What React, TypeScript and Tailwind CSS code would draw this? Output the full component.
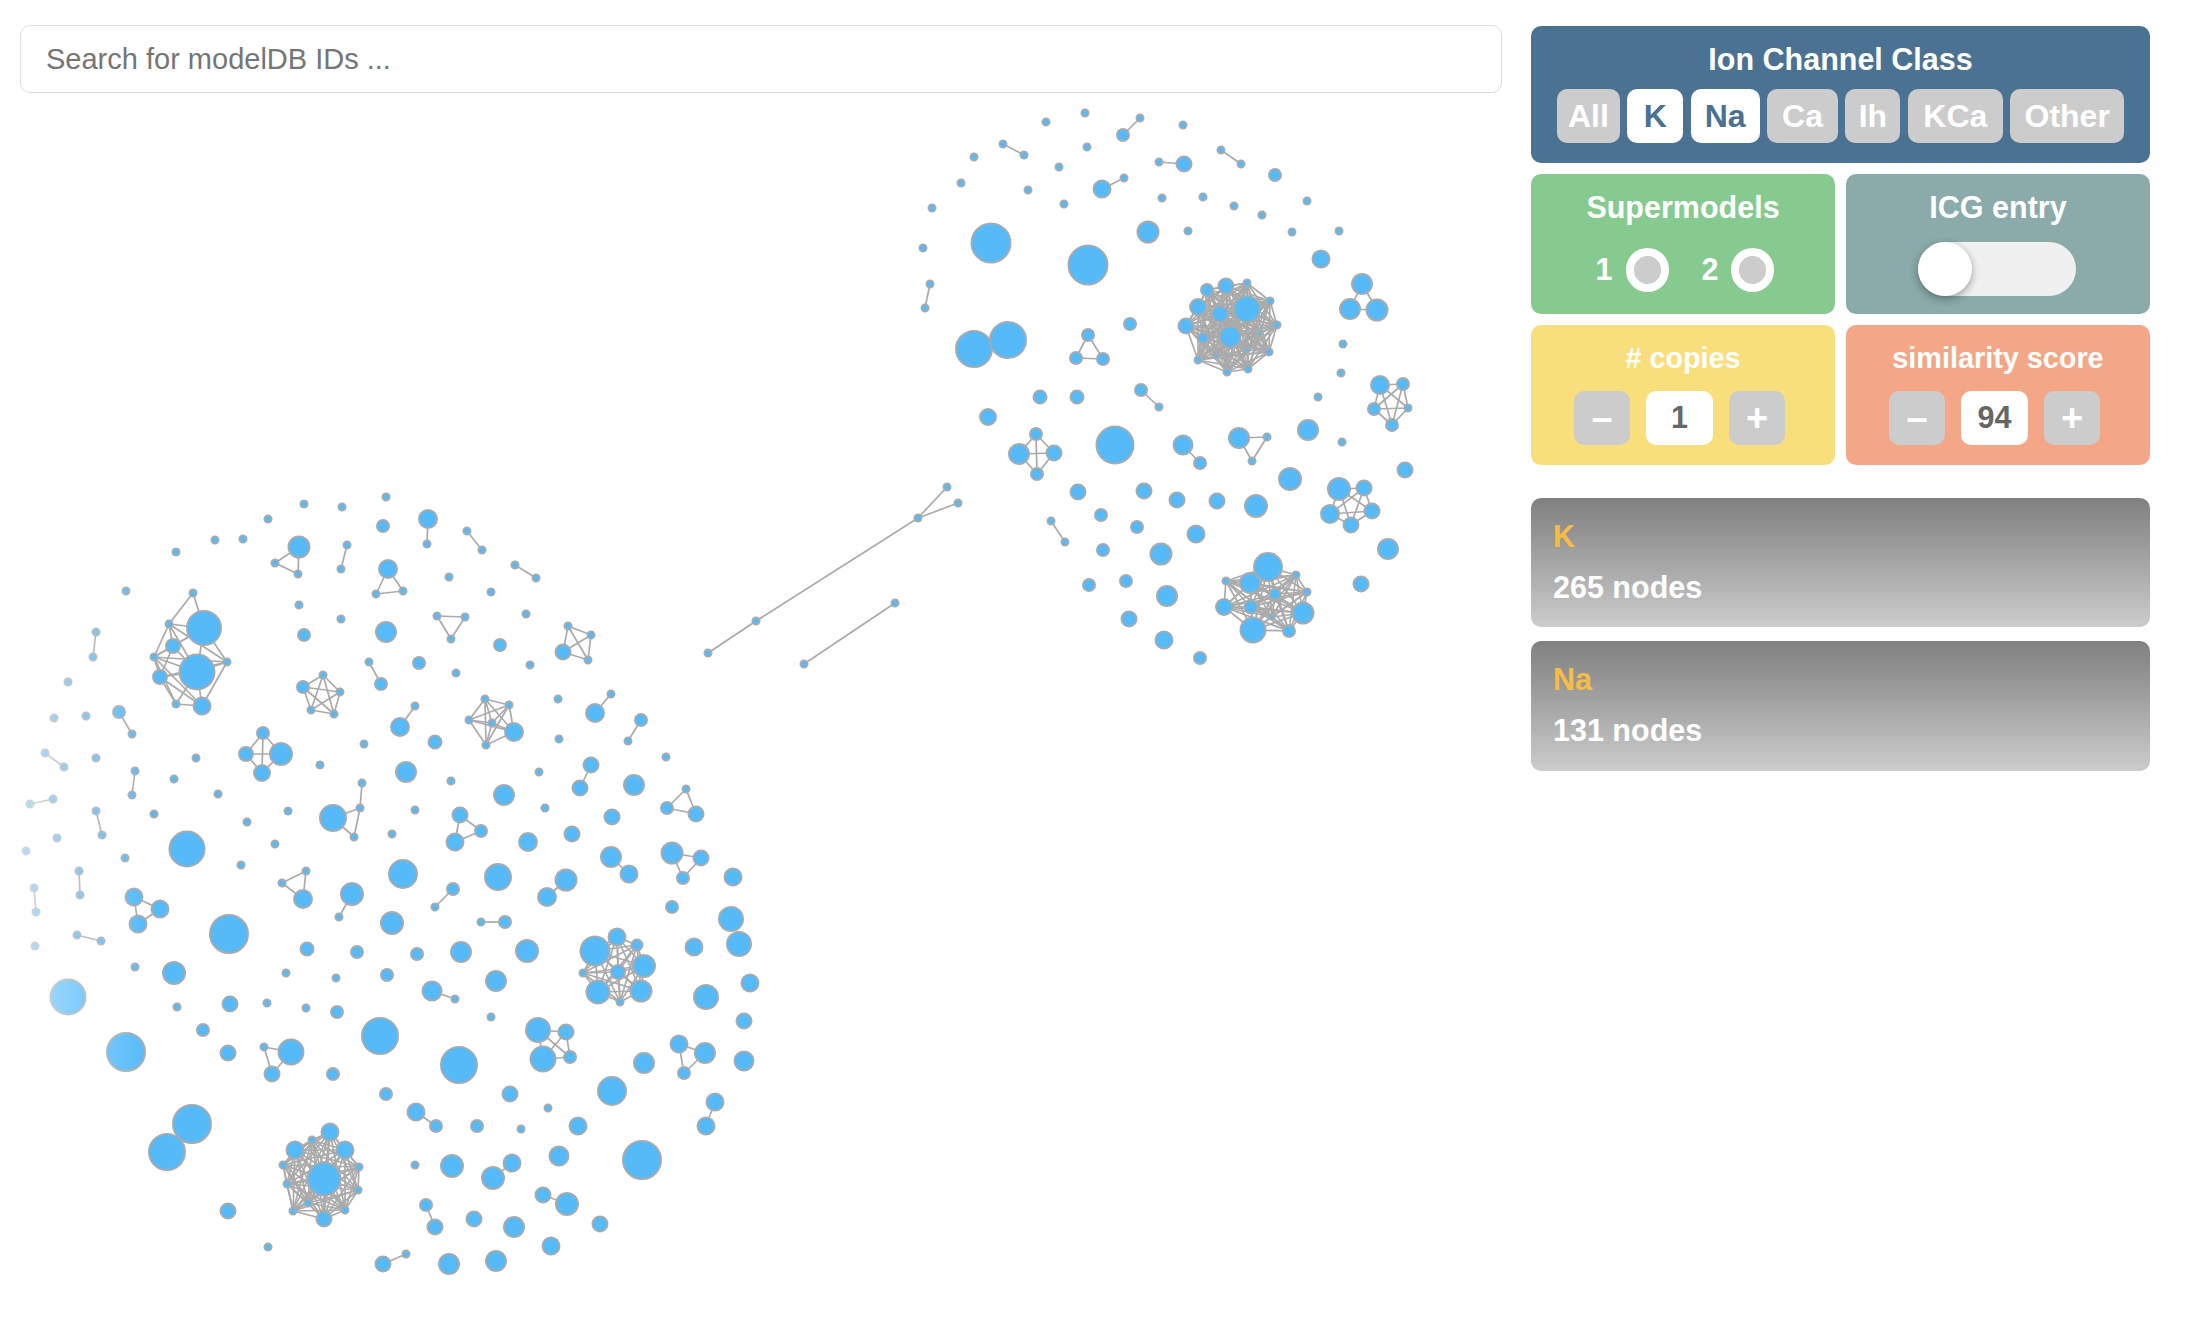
import { useState } from 'react';

type N = [number, number, number];

// x, y, outer radius. Node groups with no edge list are fully connected.
interface Group {
  nodes: N[];
  edges?: [number, number][];
}

const singles: N[] = [
  // lower component
  [176, 552, 4.5], [215, 540, 4.5], [243, 539, 4.5], [268, 519, 4.5], [304, 504, 4.5], [342, 507, 4.5],
  [386, 497, 4.5], [383, 526, 7], [126, 591, 4.5], [299, 605, 4.5], [341, 619, 4.5], [304, 635, 7],
  [386, 632, 11], [68, 682, 4.5], [54, 718, 4.5], [86, 716, 4.5], [96, 758, 4.5], [196, 758, 4.5],
  [364, 744, 4.5], [320, 765, 4.5], [406, 772, 11], [174, 779, 4.5], [449, 577, 4.5], [491, 592, 4.5],
  [526, 614, 4.5], [500, 645, 7], [419, 663, 7], [456, 673, 4.5], [530, 665, 4.5], [558, 699, 4.5],
  [559, 739, 4.5], [666, 757, 4.5], [539, 772, 4.5], [435, 742, 7.5], [634, 785, 11], [451, 781, 4.5],
  [504, 795, 11], [545, 808, 4.5], [415, 810, 4.5], [528, 842, 10], [572, 834, 8.5], [612, 817, 8.5],
  [733, 877, 9.5], [403, 874, 15], [498, 877, 14], [672, 907, 7], [731, 919, 13], [739, 944, 13],
  [694, 947, 9.5], [392, 923, 12], [417, 954, 7], [461, 952, 11], [527, 951, 12], [496, 981, 11],
  [750, 983, 9.5], [706, 997, 13], [744, 1021, 8.5], [491, 1017, 4.5], [644, 1063, 11], [744, 1061, 10.5],
  [459, 1065, 19], [612, 1091, 15], [510, 1094, 8.5], [548, 1108, 4.5], [578, 1126, 9.5], [477, 1126, 7],
  [521, 1129, 4.5], [415, 1165, 4.5], [452, 1166, 12], [559, 1156, 10.5], [642, 1160, 20], [474, 1219, 8.5],
  [514, 1227, 11], [600, 1224, 8.5], [551, 1246, 9.5], [449, 1264, 11], [496, 1261, 11], [126, 1052, 20],
  [192, 1124, 20], [167, 1152, 19], [228, 1053, 8.5], [333, 1074, 7], [380, 1036, 19], [386, 1094, 7],
  [228, 1211, 8.5], [268, 1247, 4.5], [154, 814, 4.5], [218, 794, 4.5], [247, 822, 4.5], [288, 811, 4.5],
  [57, 838, 4.5], [26, 851, 4.5], [125, 858, 4.5], [187, 849, 18.5], [275, 844, 4.5], [241, 865, 4.5],
  [392, 834, 4.5], [229, 934, 20], [35, 946, 4.5], [135, 967, 4.5], [174, 973, 12], [307, 949, 7.5],
  [357, 952, 7], [286, 973, 4.5], [336, 978, 4.5], [387, 975, 7], [68, 997, 18.5], [177, 1007, 4.5],
  [230, 1004, 8.5], [267, 1003, 4.5], [306, 1008, 4.5], [337, 1012, 7], [203, 1030, 7],
  // upper component
  [1085, 113, 4.5], [1046, 122, 4.5], [1183, 125, 4.5], [974, 157, 4.5], [1087, 147, 4.5], [1275, 175, 7],
  [1059, 167, 4.5], [961, 183, 4.5], [1028, 190, 4.5], [1064, 204, 4.5], [932, 208, 4.5], [1162, 198, 4.5],
  [1203, 197, 4.5], [1234, 206, 4.5], [1262, 215, 4.5], [1307, 201, 4.5], [1292, 232, 4.5], [1339, 231, 4.5],
  [1188, 231, 4.5], [1148, 232, 11.5], [991, 243, 20.5], [1088, 265, 20.5], [923, 248, 4.5], [1321, 259, 9.5],
  [974, 349, 19], [1008, 340, 19], [1130, 324, 7], [1343, 344, 4.5], [1341, 373, 4.5], [1040, 397, 7.5],
  [1077, 397, 7.5], [988, 417, 9], [1318, 397, 4.5], [1308, 430, 11], [1342, 442, 4.5], [1115, 445, 19.5],
  [1290, 479, 12], [1405, 470, 8.5], [1078, 492, 8.5], [1144, 491, 8.5], [1177, 500, 8.5], [1217, 501, 8.5],
  [1256, 506, 12], [1101, 515, 7], [1137, 527, 7], [1196, 534, 9.5], [1103, 550, 7], [1161, 554, 11.5],
  [1388, 549, 11], [1089, 585, 7], [1126, 581, 7], [1167, 596, 11], [1361, 584, 8.5], [1129, 619, 8.5],
  [1164, 640, 9.5], [1200, 658, 7],
];

const pair = (a: N, b: N): Group => ({ nodes: [a, b] });

const groups: Group[] = [
  // lower component, small groups
  { nodes: [[299, 547, 11.5], [275, 563, 4.5], [298, 574, 4.5]] },
  pair([347, 545, 4.5], [341, 569, 4.5]),
  { nodes: [[388, 569, 10], [376, 594, 4.5], [403, 591, 4.5]], edges: [[0, 1], [1, 2], [0, 2]] },
  pair([369, 662, 4.5], [381, 684, 7]),
  { nodes: [[323, 675, 4.5], [303, 687, 7], [340, 692, 4.5], [311, 710, 4.5], [334, 714, 4.5]] },
  pair([96, 632, 4.5], [93, 657, 4.5]),
  pair([119, 712, 7], [132, 734, 4.5]),
  pair([45, 753, 4.5], [64, 767, 4.5]),
  { nodes: [[263, 733, 7], [246, 754, 8], [281, 754, 12], [262, 773, 9]] },
  pair([415, 706, 4.5], [400, 727, 10]),
  pair([135, 771, 4.5], [132, 795, 4.5]),
  {
    nodes: [[362, 783, 4.5], [360, 808, 4.5], [333, 818, 14], [354, 837, 4.5]],
    edges: [[0, 1], [1, 2], [1, 3], [2, 3]],
  },
  pair([428, 519, 10], [427, 544, 4.5]),
  pair([467, 531, 4.5], [482, 550, 4.5]),
  pair([515, 565, 4.5], [536, 578, 4.5]),
  { nodes: [[437, 616, 4.5], [465, 617, 4.5], [451, 639, 4.5]] },
  { nodes: [[568, 626, 4.5], [591, 635, 4.5], [563, 652, 8.5], [588, 660, 4.5]] },
  pair([611, 694, 4.5], [595, 713, 10]),
  pair([641, 720, 7], [628, 741, 4.5]),
  { nodes: [[485, 699, 4.5], [509, 705, 4.5], [469, 720, 4.5], [492, 723, 4.5], [514, 732, 10], [486, 745, 4.5]] },
  pair([591, 765, 8.5], [580, 788, 8.5]),
  { nodes: [[460, 815, 8.5], [481, 831, 7], [455, 842, 9.5]] },
  { nodes: [[686, 789, 4.5], [667, 808, 7], [696, 814, 8.5]] },
  pair([611, 857, 11], [629, 874, 9.5]),
  { nodes: [[672, 853, 11.5], [701, 858, 8.5], [683, 878, 7]], edges: [[0, 1], [1, 2], [0, 2]] },
  pair([566, 880, 11.5], [547, 897, 10]),
  pair([453, 889, 7], [435, 907, 4.5]),
  pair([481, 922, 4.5], [505, 922, 7]),
  pair([432, 991, 10.5], [455, 999, 4.5]),
  { nodes: [[538, 1030, 13], [566, 1032, 8.5], [543, 1059, 13.5], [570, 1057, 7]] },
  { nodes: [[679, 1044, 9.5], [705, 1053, 11], [684, 1073, 7]] },
  pair([715, 1102, 9.5], [706, 1126, 9.5]),
  pair([416, 1112, 9.5], [436, 1126, 7]),
  pair([512, 1163, 9.5], [493, 1178, 12]),
  pair([543, 1195, 8.5], [567, 1204, 12]),
  pair([426, 1205, 7], [435, 1227, 8.5]),
  pair([406, 1254, 4.5], [383, 1264, 8.5]),
  { nodes: [[291, 1052, 13.5], [272, 1074, 8.5], [264, 1047, 4.5]] },
  pair([30, 804, 4.5], [53, 799, 4.5]),
  pair([96, 811, 4.5], [102, 835, 4.5]),
  pair([79, 871, 4.5], [80, 895, 4.5]),
  pair([34, 888, 4.5], [36, 912, 4.5]),
  { nodes: [[134, 897, 9.5], [160, 909, 9.5], [138, 924, 9.5]] },
  { nodes: [[282, 883, 4.5], [306, 871, 4.5], [303, 899, 10]] },
  pair([352, 894, 12], [339, 917, 4.5]),
  pair([77, 935, 4.5], [101, 941, 4.5]),
  // lower component, dense clusters
  {
    nodes: [
      [193, 593, 4.5], [169, 624, 4.5], [204, 628, 18], [173, 646, 8], [154, 657, 4.5],
      [227, 662, 4.5], [197, 672, 18.5], [160, 677, 8], [176, 704, 4.5], [202, 706, 9.5],
    ],
    edges: [
      [0, 1], [0, 2], [1, 2], [1, 3], [1, 4], [1, 5], [1, 6], [2, 3], [2, 4], [2, 5], [2, 6], [3, 4], [3, 6], [3, 7],
      [4, 5], [4, 6], [4, 7], [4, 8], [4, 9], [5, 6], [5, 7], [5, 9], [6, 7], [6, 8], [6, 9], [7, 8], [7, 9], [8, 9],
    ],
  },
  {
    nodes: [
      [595, 951, 15.5], [617, 937, 9.5], [637, 945, 6.5], [644, 966, 12], [618, 972, 8],
      [583, 973, 4.5], [598, 992, 12.5], [641, 991, 11.5], [620, 1002, 4.5],
    ],
  },
  {
    nodes: [
      [324, 1179, 17.5], [330, 1132, 9.5], [312, 1140, 4.5], [295, 1150, 9.5], [345, 1150, 9.5], [283, 1165, 4.5],
      [359, 1167, 4.5], [287, 1184, 4.5], [358, 1190, 4.5], [308, 1203, 4.5], [293, 1211, 4.5], [345, 1210, 4.5],
      [324, 1219, 8.5],
    ],
  },
  // the two pairs between the components
  {
    nodes: [[708, 653, 4.5], [756, 621, 4.5], [918, 518, 4.5], [947, 487, 4.5], [958, 503, 4.5]],
    edges: [[0, 1], [1, 2], [2, 3], [2, 4]],
  },
  pair([804, 664, 4.5], [895, 603, 4.5]),
  // upper component
  pair([1140, 118, 4.5], [1123, 135, 7]),
  pair([1003, 144, 4.5], [1024, 155, 4.5]),
  pair([1159, 162, 4.5], [1184, 164, 8.5]),
  pair([1221, 150, 4.5], [1241, 164, 4.5]),
  pair([1124, 178, 4.5], [1102, 189, 9.5]),
  pair([930, 284, 4.5], [925, 308, 4.5]),
  { nodes: [[1362, 284, 11], [1350, 309, 11], [1377, 310, 11.5]] },
  { nodes: [[1088, 335, 7], [1076, 358, 7], [1103, 359, 7]] },
  pair([1141, 390, 7], [1159, 407, 4.5]),
  { nodes: [[1380, 385, 10], [1403, 384, 7], [1374, 409, 7], [1408, 408, 4.5], [1392, 425, 7]] },
  { nodes: [[1036, 434, 7], [1019, 454, 11], [1054, 453, 8.5], [1037, 474, 7]] },
  pair([1183, 445, 10.5], [1200, 463, 7]),
  { nodes: [[1239, 438, 11], [1267, 437, 4.5], [1252, 461, 4.5]] },
  { nodes: [[1339, 489, 12], [1364, 488, 8.5], [1330, 514, 10], [1372, 511, 8.5], [1351, 525, 8.5]] },
  pair([1051, 521, 4.5], [1065, 542, 4.5]),
  {
    nodes: [
      [1247, 283, 4.5], [1226, 286, 8.5], [1207, 290, 7], [1270, 301, 4.5], [1198, 307, 9], [1247, 309, 14],
      [1220, 314, 9], [1186, 326, 8.5], [1277, 325, 4.5], [1230, 337, 11.5], [1203, 338, 6], [1260, 333, 3.5],
      [1247, 350, 3.5], [1269, 352, 4.5], [1198, 360, 4.5], [1216, 356, 3.5], [1227, 372, 4.5], [1248, 369, 4.5],
    ],
  },
  {
    nodes: [
      [1268, 567, 15], [1296, 575, 4.5], [1226, 581, 4.5], [1250, 583, 11], [1275, 594, 6.5], [1307, 592, 4.5],
      [1224, 607, 9], [1251, 607, 7.5], [1272, 617, 3.5], [1303, 613, 11.5], [1253, 630, 13.5], [1289, 631, 7],
    ],
  },
];

function allPairs(count: number) {
  const out: [number, number][] = [];
  for (let i = 0; i < count; i++) {
    for (let j = i + 1; j < count; j++) out.push([i, j]);
  }
  return out;
}

function Graph() {
  const lines = groups.flatMap(g =>
    (g.edges ?? allPairs(g.nodes.length)).map(([a, b]) => [g.nodes[a], g.nodes[b]] as const)
  );
  const circles = [...singles, ...groups.flatMap(g => g.nodes)];

  return (
    <svg className="absolute left-0 top-0" width={2186} height={1326}>
      <defs>
        <linearGradient id="fade" x1="0" x2="1" y1="0" y2="0">
          <stop offset="0" stopColor="#fff" stopOpacity="0.65" />
          <stop offset="0.5" stopColor="#fff" stopOpacity="0.28" />
          <stop offset="1" stopColor="#fff" stopOpacity="0" />
        </linearGradient>
      </defs>
      {lines.map(([a, b], i) => (
        <line key={i} x1={a[0]} y1={a[1]} x2={b[0]} y2={b[1]} stroke="#aaaaaa" strokeWidth={1.7} />
      ))}
      {circles.map(([x, y, r], i) => (
        <circle key={i} cx={x} cy={y} r={r - 0.9} fill="#56baf9" stroke="#aaaaaa" strokeWidth={1.8} />
      ))}
      <rect x={0} y={480} width={150} height={846} fill="url(#fade)" />
    </svg>
  );
}

const channels = [
  { label: 'All', width: 'w-[63px]', active: false },
  { label: 'K', width: 'w-[56px]', active: true },
  { label: 'Na', width: 'w-[69px]', active: true },
  { label: 'Ca', width: 'w-[71px]', active: false },
  { label: 'Ih', width: 'w-[55px]', active: false },
  { label: 'KCa', width: 'w-[95px]', active: false },
  { label: 'Other', width: 'w-[114px]', active: false },
];

function Radio({ label }: { label: string }) {
  return (
    <div className="flex items-center gap-[13px]">
      <span>{label}</span>
      <span className="h-[44px] w-[43px] rounded-full border-[8px] border-white bg-[#cccccc]" />
    </div>
  );
}

function Stepper({ value }: { value: number }) {
  const [count, setCount] = useState(value);
  return (
    <div className="mr-[7px] mt-[16px] flex items-center gap-[16px]">
      <button
        className="h-[54px] w-[56px] rounded-[10px] bg-[#cccccc] text-[38px] font-bold leading-none text-white"
        onClick={() => setCount(c => c - 1)}
      >
        –
      </button>
      <div className="flex h-[54px] w-[67px] items-center justify-center rounded-[10px] bg-white text-[#666666]">
        {count}
      </div>
      <button
        className="h-[54px] w-[56px] rounded-[10px] bg-[#cccccc] text-[38px] font-bold leading-none text-white"
        onClick={() => setCount(c => c + 1)}
      >
        +
      </button>
    </div>
  );
}

function Summary({ name, nodes, height }: { name: string; nodes: number; height: string }) {
  return (
    <div className={`rounded-[10px] bg-linear-to-b from-[#808080] to-[#cccccc] px-[22px] pt-[21px] ${height}`}>
      <div className="leading-[34px] text-[#f5bd45]">{name}</div>
      <div className="mt-[17px] leading-[34px] text-white">{nodes} nodes</div>
    </div>
  );
}

export default function App() {
  const [selected, setSelected] = useState(['K', 'Na']);

  const toggle = (label: string) => {
    setSelected(prev => (prev.includes(label) ? prev.filter(s => s !== label) : [...prev, label]));
  };

  return (
    <div className="relative flex h-[1326px] w-[2186px] items-start gap-[29px] overflow-hidden bg-white pl-[20px] pt-[25px] font-['Liberation_Sans',Arial,sans-serif] text-[30.5px] font-bold">
      <Graph />

      <input
        className="relative h-[68px] w-[1482px] rounded-[10px] border border-[#dddddd] px-[25px] text-[29px] font-normal placeholder:text-[#757575] focus:outline-none"
        placeholder="Search for modelDB IDs ..."
      />

      <aside className="relative mt-[1px] flex w-[619px] flex-col">
        <div className="flex h-[137px] flex-col items-center rounded-[10px] bg-[#4b7292] pt-[16px] text-white">
          <div className="leading-[34px]">Ion Channel Class</div>
          <div className="mt-[13px] flex gap-[7.4px]">
            {channels.map(c => {
              const on = selected.includes(c.label);
              return (
                <button
                  key={c.label}
                  onClick={() => toggle(c.label)}
                  className={`h-[54px] rounded-[10px] text-[32px] font-bold ${c.width} ${on ? 'bg-white text-[#4b7292]' : 'bg-[#cccccc] text-white'}`}
                >
                  {c.label}
                </button>
              );
            })}
          </div>
        </div>

        <div className="mt-[11px] grid grid-cols-2 gap-[11px] text-white">
          <div className="flex h-[140px] flex-col items-center rounded-[10px] bg-[#87ca90] pt-[16px]">
            <div className="leading-[34px]">Supermodels</div>
            <div className="ml-[4px] mt-[23px] flex gap-[33px]">
              <Radio label="1" />
              <Radio label="2" />
            </div>
          </div>

          <div className="flex h-[140px] flex-col items-center rounded-[10px] bg-[#8aabaa] pt-[16px]">
            <div className="leading-[34px]">ICG entry</div>
            <div className="mr-[2px] mt-[18px] h-[54px] w-[158px] rounded-full bg-[#f0f0f0]">
              <div className="h-[54px] w-[54px] rounded-full bg-white shadow-[0_3px_8px_rgba(0,0,0,0.35)]" />
            </div>
          </div>

          <div className="flex h-[140px] flex-col items-center rounded-[10px] bg-[#f9de7c] pt-[16px]">
            <div className="text-[28.8px] leading-[34px]">
              # copies
            </div>
            <Stepper value={1} />
          </div>

          <div className="flex h-[140px] flex-col items-center rounded-[10px] bg-[#f4a787] pt-[16px]">
            <div className="text-[28.8px] leading-[34px]">
              similarity score
            </div>
            <Stepper value={94} />
          </div>
        </div>

        <div className="mt-[33px] flex flex-col gap-[14px]">
          <Summary name="K" nodes={265} height="h-[129px]" />
          <Summary name="Na" nodes={131} height="h-[130px]" />
        </div>
      </aside>
    </div>
  );
}
